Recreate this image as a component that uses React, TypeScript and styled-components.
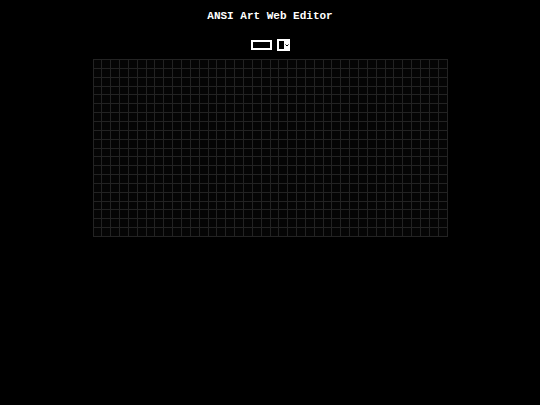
import React from "react";
import styled, { createGlobalStyle } from "styled-components";

const Global = createGlobalStyle`
  html, body { margin: 0; padding: 0; background: #000; }
  body { font-family: "Nimbus Mono PS", "Courier", "Liberation Mono", monospace; color: #fff; }
`;

const Page = styled.div`
  display: flex;
  flex-direction: column;
  align-items: center;
  padding-top: 10px;
`;

const Title = styled.h1`
  margin: 0;
  font-size: 11px;
  line-height: 13px;
  font-weight: bold;
  color: #ffffff;
`;

const Toolbar = styled.div`
  display: flex;
  align-items: center;
  gap: 5px;
  margin-top: 16px;
  height: 12px;
`;

const Swatch = styled.div<{ $color: string }>`
  box-sizing: border-box;
  width: 21px;
  height: 10px;
  border: 2px solid #fff;
  background: ${(p) => p.$color};
`;

const Picker = styled.div`
  box-sizing: border-box;
  width: 13px;
  height: 12px;
  background: #fff;
  display: flex;
  align-items: center;
  padding-left: 2px;
  gap: 1px;
`;

const Block = styled.div`
  width: 5px;
  height: 8px;
  background: #000;
`;

const Grid = styled.div<{ $cols: number; $rows: number }>`
  box-sizing: border-box;
  margin-top: 8px;
  width: 355px;
  height: 178px;
  display: grid;
  grid-template-columns: repeat(${(p) => p.$cols}, 1fr);
  grid-template-rows: repeat(${(p) => p.$rows}, 1fr);
  border-left: 1px solid #232323;
  border-top: 1px solid #232323;
  background: #050505;
`;

const Cell = styled.div`
  border-right: 1px solid #232323;
  border-bottom: 1px solid #232323;
`;

export default function App() {
  const cols = 40;
  const rows = 20;
  return (
    <>
      <Global />
      <Page>
        <Title>ANSI Art Web Editor</Title>
        <Toolbar>
          <Swatch $color="#000" />
          <Picker>
            <Block />
            <svg width="4" height="3" viewBox="0 0 4 3">
              <path d="M0.5 0.5 L2 2 L3.5 0.5" stroke="#000" strokeWidth="1" fill="none" />
            </svg>
          </Picker>
        </Toolbar>
        <Grid $cols={cols} $rows={rows}>
          {Array.from({ length: cols * rows }, (_, i) => (
            <Cell key={i} />
          ))}
        </Grid>
      </Page>
    </>
  );
}
